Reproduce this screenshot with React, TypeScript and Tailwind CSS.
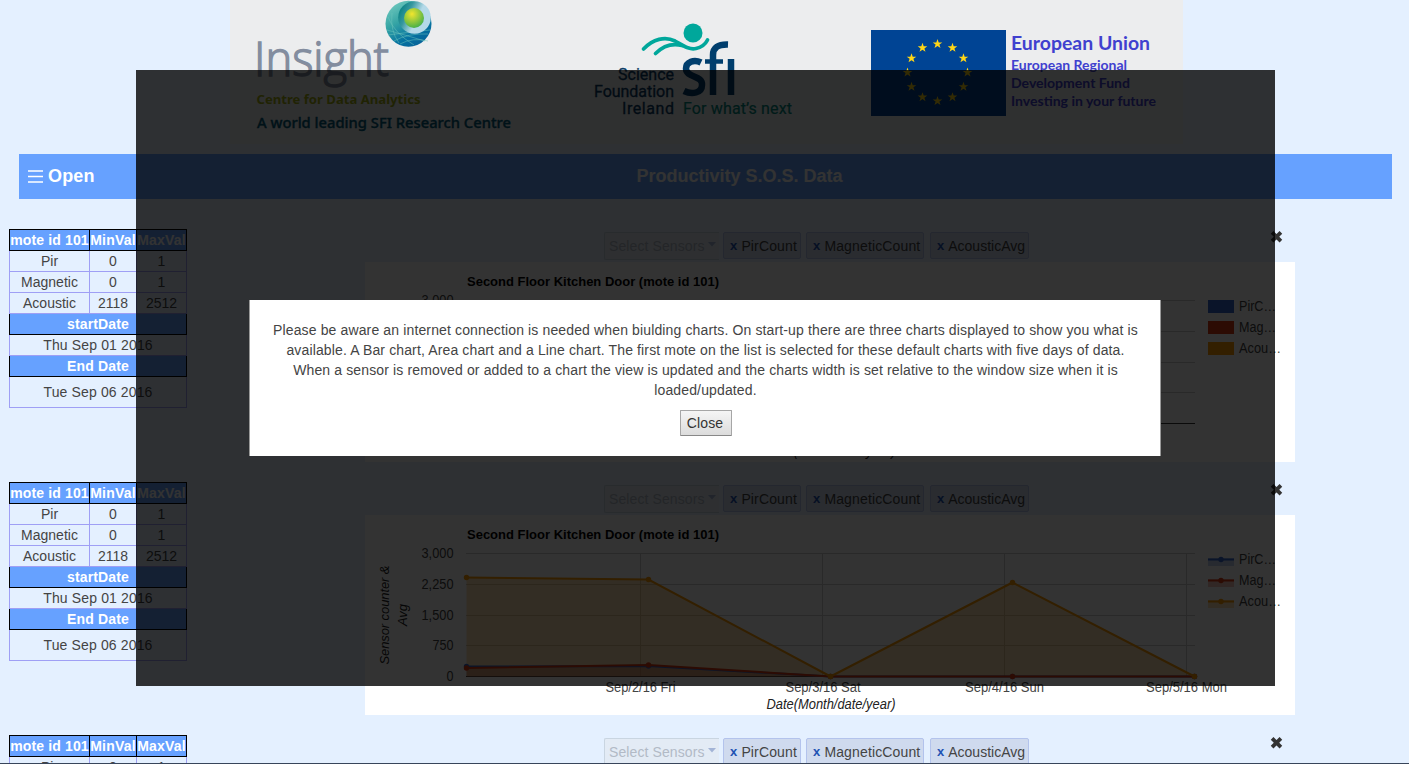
import React from "react";

const TagChip = ({ label, className }: { label: string; className: string }) => (
  <span className={`flex h-[27px] items-center rounded-[2px] border border-[#b3c3ec] bg-[#cfdaee] pl-[6px] pt-[1px] text-[14px] whitespace-nowrap text-[#444] ${className}`}>
    <b className="mr-[4px] text-[13px] text-[#2153b4]">x</b>
    {label}
  </span>
);

const SensorPicker = () => (
  <div className="flex h-[27px] pl-[239px]">
    <div className="flex h-[28px] w-[115px] shrink-0 items-center rounded-l-[2px] border border-r-0 border-[#c9d5e1] bg-[#e3ebf5] pl-[4px] text-[14px] text-[#b2bac6]">
      <span className="tracking-[0.1px] whitespace-nowrap">Select Sensors</span>
      <svg className="mb-[4px] ml-[3px] shrink-0" width="8" height="5"><path d="M0 0h8L4 4.5z" fill="#a3b4d6" /></svg>
    </div>
    <TagChip label="PirCount" className="ml-[4px] w-[78px] tracking-[0.14px]" />
    <TagChip label="MagneticCount" className="ml-[5px] w-[118px] tracking-[0.14px]" />
    <TagChip label="AcousticAvg" className="ml-[6px] w-[99px]" />
  </div>
);

const head = "h-[21px] border border-black bg-[#66a1ff] p-0 font-bold text-white leading-[20px]";
const cell = "h-[21px] border border-[#9f9ff5] p-0 leading-[20px]";

const MoteTable = () => (
  <table className="h-fit w-[178px] table-fixed border-collapse text-center text-[14px] text-[#444]">
    <colgroup>
      <col className="w-[80px]" />
      <col className="w-[47px]" />
      <col className="w-[50px]" />
    </colgroup>
    <tbody>
      <tr>
        <th className={`${head} tracking-[0.14px] whitespace-nowrap`}>mote id 101</th>
        <th className={`${head} tracking-[0.2px]`}>MinVal</th>
        <th className={`${head} tracking-[0.2px]`}>MaxVal</th>
      </tr>
      {[["Pir", "0", "1"], ["Magnetic", "0", "1"], ["Acoustic", "2118", "2512"]].map((r) => (
        <tr key={r[0]}>{r.map((c, i) => <td key={i} className={cell}>{c}</td>)}</tr>
      ))}
      <tr><th colSpan={3} className={`${head} tracking-[0.14px]`}>startDate</th></tr>
      <tr><td colSpan={3} className={`${cell} tracking-[0.14px]`}>Thu Sep 01 2016</td></tr>
      <tr><th colSpan={3} className={`${head} tracking-[0.14px]`}>End Date</th></tr>
      <tr><td colSpan={3} className="h-[31px] border border-[#9f9ff5] p-0 tracking-[0.14px]">Tue Sep 06 2016</td></tr>
    </tbody>
  </table>
);

const colors = ["#3366cc", "#dc3912", "#ff9900"];
const names: [string, number][] = [["PirC…", 37], ["Mag…", 37], ["Acou…", 42]];
const ticks: [string, number, number][] = [["3,000", 38, 32], ["2,250", 69, 32], ["1,500", 100, 32], ["750", 130, 21], ["0", 161, 7]];
const days: [string, number, number, number][] = [
  ["Sep/2/16 Fri", 275, 275.5, 70],
  ["Sep/3/16 Sat", 457, 458, 75],
  ["Sep/4/16 Sun", 639, 639.5, 79],
  ["Sep/5/16 Mon", 821, 821.5, 81],
];
const xs = [101.5, 283.5, 465.5, 647.5, 829.5];
const series = [
  [151, 150.5, 161, 161, 161],
  [152.5, 149.5, 161, 161, 161],
  [62, 64, 161, 67, 161],
];

const Chart = ({ kind }: { kind: "bar" | "area" }) => (
  <svg width="930" height="200" className="block bg-white" fontFamily="Liberation Sans, Arial, sans-serif" fontSize="14" fill="#444">
    <text x="102" y="24" fontSize="13.5" fontWeight="bold" fill="#000" textLength="252" lengthAdjust="spacingAndGlyphs">Second Floor Kitchen Door (mote id 101)</text>
    {ticks.map(([t, y, w], i) => (
      <g key={t}>
        {(kind === "area" || i === 0) && <text x={88.5 - w} y={y + 5} textLength={w} lengthAdjust="spacingAndGlyphs">{t}</text>}
        <rect x="101" y={y} width="729" height="1" fill={t === "0" ? "#333" : "#ccc"} />
      </g>
    ))}
    {kind === "area" && days.map(([d, gx, tx, w]) => (
      <g key={d}>
        <rect x={gx} y="38" width="1" height="123" fill="#ccc" />
        <text x={tx - w / 2} y="177" textLength={w} lengthAdjust="spacingAndGlyphs">{d}</text>
      </g>
    ))}
    <text x="401.5" y="194" fontStyle="italic" fill="#222" textLength="129" lengthAdjust="spacingAndGlyphs">Date(Month/date/year)</text>
    {kind === "area" && (
      <g fontSize="13" fontStyle="italic" fill="#222" textAnchor="middle">
        <text transform="translate(24 100) rotate(-90)" textLength="99">Sensor counter &amp;</text>
        <text transform="translate(42 100) rotate(-90)">Avg</text>
      </g>
    )}
    {kind === "area" && (
      <g>
        {series.map((s, i) => (
          <polygon key={i} fill={colors[i]} fillOpacity="0.3" points={`${xs[0]},161.5 ${s.map((y, k) => `${xs[k]},${y + 0.5}`).join(" ")} ${xs[4]},161.5`} />
        ))}
        {series.map((s, i) => (
          <g key={i} fill={colors[i]}>
            <polyline fill="none" stroke={colors[i]} strokeWidth="2" points={s.map((y, k) => `${xs[k]},${y + 0.5}`).join(" ")} />
            {s.map((y, k) => <circle key={k} cx={xs[k]} cy={y + 0.5} r="2.7" />)}
          </g>
        ))}
      </g>
    )}
    {names.map(([n, w], i) => (
      <g key={n}>
        {kind === "bar" ? (
          <rect x="843" y={38 + i * 21} width="26" height="13" fill={colors[i]} />
        ) : (
          <g fill={colors[i]}>
            <rect x="843" y={43 + i * 21} width="26" height="8" fillOpacity="0.3" />
            <rect x="843" y={43.5 + i * 21} width="26" height="2" />
            <circle cx="856" cy={44.5 + i * 21} r="2.7" />
          </g>
        )}
        <text x="874" y={49 + i * 21} textLength={w} lengthAdjust="spacingAndGlyphs">{n}</text>
      </g>
    ))}
  </svg>
);

const ChartRow = ({ kind }: { kind: "bar" | "area" }) => (
  <section className="flex h-[253px] shrink-0 pl-[9px]">
    <MoteTable />
    <div className="ml-[178px] flex w-[930px] flex-col pt-[3px]">
      <div className="flex">
        <SensorPicker />
        <svg className="-mt-[2px] mr-[12px] ml-auto shrink-0" width="13" height="13" viewBox="0 0 13 13">
          <path d="M2.1 2.3l8.8 8.8M10.9 2.3l-8.8 8.8" stroke="#333" strokeWidth="3.8" />
        </svg>
      </div>
      <div className="mt-[3px]"><Chart kind={kind} /></div>
    </div>
  </section>
);

const star = "0,-5 1.2,-1.6 4.8,-1.6 1.9,.6 3,4 0,1.9 -3,4 -1.9,.6 -4.8,-1.6 -1.2,-1.6";

const Banner = () => (
  <svg className="ml-[230px] block bg-[#ecedee]" width="953" height="144" viewBox="230 0 953 144">
    <defs>
      <linearGradient id="orb" x1="0" y1="0" x2=".6" y2="1">
        <stop offset="0" stopColor="#7fd2c4" /><stop offset=".45" stopColor="#36a5a5" /><stop offset=".8" stopColor="#0672a0" /><stop offset="1" stopColor="#07659a" />
      </linearGradient>
      <linearGradient id="ring" x1="0" y1=".2" x2="1" y2=".7">
        <stop offset="0" stopColor="#007d7e" /><stop offset=".3" stopColor="#36979f" /><stop offset=".6" stopColor="#b4d9e8" />
      </linearGradient>
      <radialGradient id="core" cx=".4" cy=".3" r=".7">
        <stop offset="0" stopColor="#f2e52d" /><stop offset="1" stopColor="#49b148" />
      </radialGradient>
    </defs>
    <text x="254" y="76" fontFamily="Open Sans, sans-serif" fontWeight="300" fontSize="48" fill="#838d9f" stroke="#838d9f" strokeWidth="1.5" textLength="135" lengthAdjust="spacingAndGlyphs">Insight</text>
    <circle cx="408.5" cy="23.8" r="23" fill="url(#orb)" />
    <g fill="none" stroke="#70c6bd" strokeWidth=".6" opacity=".8">
      <path d="M387 30q18 5 38 11M388 35q22-3 42-5M394 41q14-8 34-7M388 17q6 16 26 28M392 13q-2 18 7 30M400 44q13-7 28-3" />
    </g>
    <circle cx="414.5" cy="17.5" r="16.3" fill="url(#ring)" />
    <circle cx="414" cy="18" r="10" fill="url(#core)" />
    <g fontFamily="Noto Sans, sans-serif">
      <text x="256.5" y="104" fontSize="13" fontWeight="700" fill="#9fae12" textLength="164" lengthAdjust="spacingAndGlyphs">Centre for Data Analytics</text>
      <text x="257" y="128" fontSize="14.5" fontWeight="500" fill="#005a78" stroke="#005a78" strokeWidth=".35" textLength="254" lengthAdjust="spacingAndGlyphs">A world leading SFI Research Centre</text>
    </g>
    <circle cx="693" cy="33" r="9.5" fill="#00a79b" />
    <g fill="none" stroke="#00a79b" strokeWidth="3.7" strokeLinecap="round">
      <path d="M643.5 49C653 39 665 36 675 41C684 46 689 50 696 48.5C703 47 706 43 707.5 40" />
      <path d="M655.5 53.5C663 46 672 43 682 45.500" />
    </g>
    <g fill="none" stroke="#003e6d" strokeWidth="6.5">
      <path d="M701 62.5C694 59 686 62 686 68.5C686 78 703 75 702 85C702 93 692 95 684 91" />
      <path d="M713 95V55Q713 44 728 44.5" />
      <path d="M705 61.5H723" strokeWidth="4.5" />
      <path d="M731 59V95" />
    </g>
    <g fontFamily="Roboto, sans-serif" fontSize="16" fontWeight="400" fill="#083a63">
      <g stroke="#083a63" strokeWidth=".3">
        <text x="618" y="80" textLength="56">Science</text>
        <text x="594" y="97" textLength="80">Foundation</text>
        <text x="622" y="114" textLength="52">Ireland</text>
      </g>
      <text x="683" y="114" fill="#00897f" stroke="#00897f" strokeWidth=".2" textLength="109">For what’s next</text>
    </g>
    <rect x="871" y="30" width="135" height="86" fill="#004494" />
    <g fill="#ffd617">
      {[0, 1, 2, 3, 4, 5, 6, 7, 8, 9, 10, 11].map((i) => {
        const a = (i * Math.PI) / 6;
        return <polygon key={i} points={star} transform={`translate(${937.5 + 30 * Math.sin(a)} ${72.5 - 28.5 * Math.cos(a)})`} />;
      })}
    </g>
    <g fontFamily="Lato, sans-serif" fontWeight="700" fill="#4040cf">
      <text x="1011" y="50" fontSize="19" textLength="139" lengthAdjust="spacingAndGlyphs">European Union</text>
      <text x="1011" y="70" fontSize="13.5" textLength="116" lengthAdjust="spacingAndGlyphs">European Regional</text>
      <text x="1011" y="88" fontSize="13.5" textLength="119" lengthAdjust="spacingAndGlyphs">Development Fund</text>
      <text x="1011" y="106" fontSize="13.5" textLength="145" lengthAdjust="spacingAndGlyphs">Investing in your future</text>
    </g>
  </svg>
);

export default function App() {
  return (
    <div className="relative flex h-[764px] w-[1409px] flex-col overflow-hidden bg-[#e4f0ff] font-['Liberation_Sans',Arial,sans-serif]">
      <header className="h-[154px] shrink-0"><Banner /></header>
      <nav className="ml-[19px] grid h-[45px] w-[1373px] shrink-0 grid-cols-[200px_1fr_200px] items-center bg-[#66a1ff] text-[18px] font-bold text-white">
        <div className="flex items-center gap-[5px] pl-[9px]">
          <svg width="15" height="13"><path d="M0 1h15M0 6.5h15M0 12h15" stroke="#fff" strokeWidth="1.4" /></svg>
          <span className="tracking-[0.15px]">Open</span>
        </div>
        <h1 className="pl-[68px] text-center">Productivity S.O.S. Data</h1>
      </nav>
      <main className="flex flex-col pt-[30px]">
        <ChartRow kind="bar" />
        <ChartRow kind="area" />
        <ChartRow kind="area" />
      </main>
      <div className="absolute inset-x-0 bottom-0 h-px bg-[#38455a]" />
      <div className="absolute top-[70px] left-[136px] flex h-[616px] w-[1139px] justify-center bg-black/80 pt-[230px]">
        <div role="dialog" className="mr-[1px] flex h-[156px] w-[912px] flex-col items-center border-x border-[#999] bg-white pt-[20px] text-center text-[14px] leading-[20px] text-[#444]">
          <p className="pl-px tracking-[0.135px] whitespace-nowrap">
            Please be aware an internet connection is needed when biulding charts. On start-up there are three charts displayed to show you what is<br />
            available. A Bar chart, Area chart and a Line chart. The first mote on the list is selected for these default charts with five days of data.<br />
            When a sensor is removed or added to a chart the view is updated and the charts width is set relative to the window size when it is<br />
            loaded/updated.
          </p>
          <button className="mt-[10px] ml-[2px] h-[26px] w-[52px] rounded-[1px] border border-[#a6a6a6] border-b-[#888] bg-linear-to-b from-[#f5f5f5] to-[#dcdcdc] pr-[2px] text-[14px] tracking-[0.1px] text-[#333]">Close</button>
        </div>
      </div>
    </div>
  );
}
